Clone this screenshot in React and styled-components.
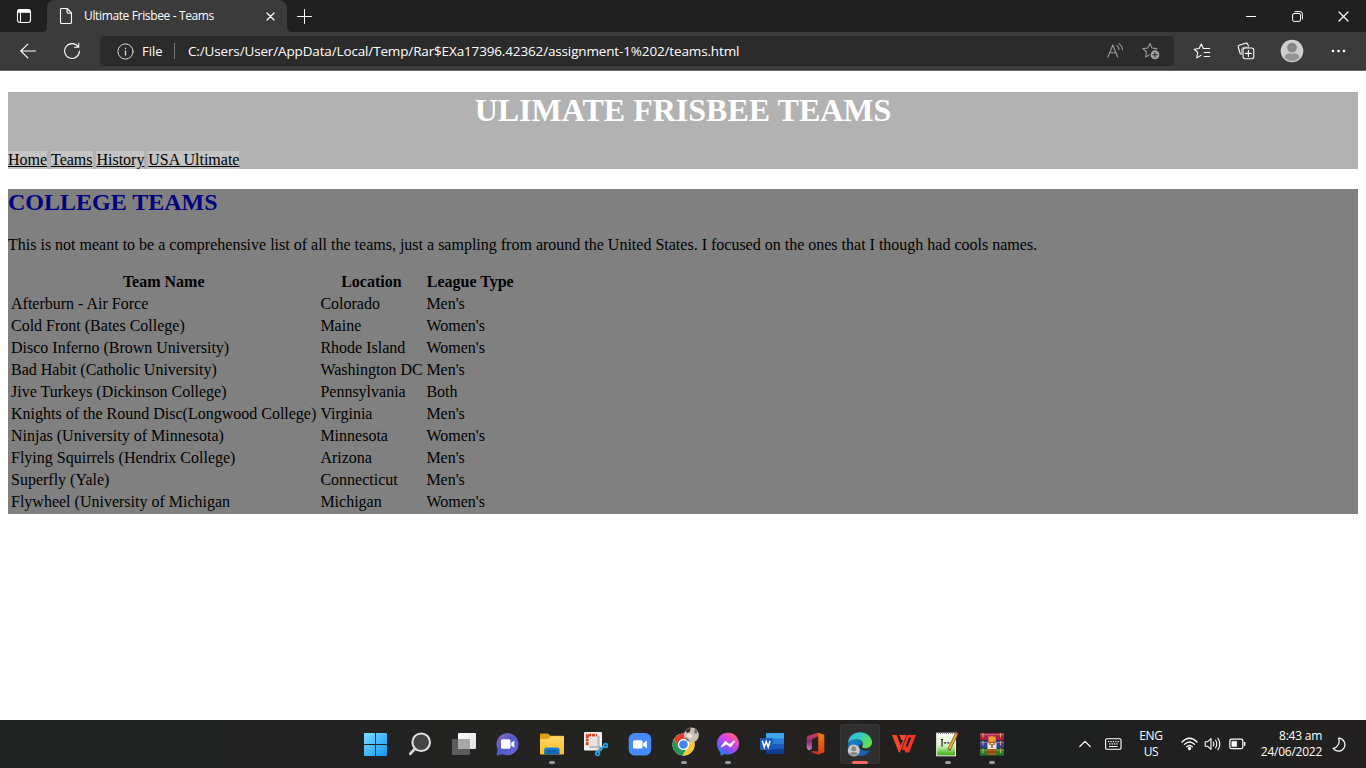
import React from "react";
import styled, { createGlobalStyle } from "styled-components";

const Global = createGlobalStyle`
  *, *::before, *::after { box-sizing: border-box; }
  html, body { margin: 0; padding: 0; background: #fff; overflow: hidden; }
  svg { display: block; flex: none; }
`;

const UI = `"Open Sans", "Noto Sans", sans-serif`;

const Screen = styled.div`
  width: 1366px;
  height: 768px;
  display: flex;
  flex-direction: column;
  background: #fff;
  overflow: hidden;
`;

/* ---------- browser window ---------- */

const TitleBar = styled.div`
  height: 32px;
  flex: none;
  display: flex;
  background: #202020;
  color: #fff;
`;

const Slot = styled.div`
  width: ${(p) => p.$w}px;
  flex: none;
  display: flex;
  align-items: center;
  justify-content: center;
`;

const Tab = styled.div`
  position: relative;
  width: 240px;
  flex: none;
  display: flex;
  align-items: center;
  padding: 0 12px 0 12px;
  background: #3b3b3b;
  border-radius: 8px 8px 0 0;

  &::before, &::after {
    content: "";
    position: absolute;
    bottom: 0;
    width: 4px;
    height: 4px;
  }
  &::before {
    left: -4px;
    background: radial-gradient(circle at 0 0, transparent 3.6px, #3b3b3b 4px);
  }
  &::after {
    right: -4px;
    background: radial-gradient(circle at 100% 0, transparent 3.6px, #3b3b3b 4px);
  }
`;

const TabTitle = styled.span`
  flex: 1;
  margin-left: 11px;
  font: 12px/16px ${UI};
  letter-spacing: -0.36px;
  white-space: nowrap;
`;

const Spacer = styled.div`
  flex: 1;
`;

const Toolbar = styled.div`
  height: 39px;
  flex: none;
  display: flex;
  align-items: center;
  padding: 0 6px;
  background: #3b3b3b;
  border-bottom: 1px solid #6c6a6a;
  color: #fff;
`;

const AddressBar = styled.div`
  width: 1074px;
  height: 30px;
  margin: 0 6px 0 6px;
  display: flex;
  align-items: center;
  padding: 0 5px 0 17px;
  background: #2b2b2b;
  border-radius: 4px;
  font: 13px/20px ${UI};
  white-space: nowrap;
`;

const Scheme = styled.span`
  width: 32px;
  margin-left: 8px;
`;

const Divider = styled.span`
  width: 1px;
  height: 16px;
  background: #797979;
`;

const Url = styled.span`
  flex: 1;
  margin-left: 13px;
  font-size: 13.5px;
  letter-spacing: -0.145px;
`;

/* ---------- web page ---------- */

const Page = styled.main`
  flex: 1;
  padding: 21px 8px 0;
  font-family: "Liberation Serif", serif;
  font-size: 16px;
  line-height: 18px;
  color: #000;
`;

const Banner = styled.header`
  height: 77px;
  background: #b2b2b2;
`;

const BannerTitle = styled.h1`
  margin: 0 0 22px;
  font-size: 32px;
  line-height: 37px;
  text-align: center;
  color: #fff;
`;

const Nav = styled.nav`
  height: 18px;
  display: flex;
  gap: 3.9px;
`;

const NavLink = styled.a`
  background: #c4c4c4;
  color: #000;
  text-decoration: underline;
`;

const Content = styled.section`
  height: 325px;
  margin-top: 20px;
  background: #808080;
`;

const Heading = styled.h2`
  margin: 0 0 20px;
  font-size: 24px;
  line-height: 27px;
  color: #000080;
`;

const Intro = styled.p`
  margin: 0 0 16px;
  white-space: nowrap;
`;

const Table = styled.table`
  border-collapse: separate;
  border-spacing: 2px;
  table-layout: fixed;
  width: 509px;
`;

const Cell = styled.td`
  padding: 1px;
  height: 20px;
  white-space: nowrap;
  line-height: 18px;
`;

const HeadCell = styled.th`
  width: ${(p) => p.$w}px;
  padding: 1px;
  height: 20px;
  white-space: nowrap;
  line-height: 18px;
`;

/* ---------- taskbar ---------- */

const Taskbar = styled.footer`
  height: 48px;
  flex: none;
  display: flex;
  align-items: center;
  padding-left: 354px;
  background: linear-gradient(90deg, #202223 0, #242321 50%, #23201e 62%, #1e2021 75%, #232120 100%);
  color: #fff;
`;

const AppSlot = styled.div`
  width: 44px;
  height: 48px;
  padding: 4px 2px;
`;

const AppTile = styled.div`
  width: 40px;
  height: 40px;
  display: flex;
  flex-direction: column;
  align-items: center;
  padding-top: 8px;
  gap: 4px;
  border-radius: 4px;
  background: ${(p) => (p.$active ? "#2f2f2f" : "transparent")};
  box-shadow: ${(p) => (p.$active ? "inset 0 0 0 1px #373737" : "none")};
`;

const Indicator = styled.span`
  width: ${(p) => (p.$active ? 16 : 6)}px;
  height: 3px;
  flex: none;
  border-radius: 2px;
  background: ${(p) => (p.$active ? "#ff6763" : "#9a9a9a")};
`;

const Tray = styled.div`
  margin-left: auto;
  padding-right: 10px;
  display: flex;
  align-items: center;
  font: 12px/16px ${UI};
`;

const Language = styled.div`
  width: 48px;
  text-align: center;
  letter-spacing: -0.3px;
`;

const Clock = styled.div`
  width: 71px;
  display: flex;
  flex-direction: column;
  align-items: flex-end;
  white-space: nowrap;
  letter-spacing: -0.25px;
`;

/* ---------- icons ---------- */

const Line = ({ w = 16, h = 16, sw = 1.1, color = "#fff", children }) => (
  <svg width={w} height={h} viewBox={`0 0 ${w} ${h}`} fill="none" stroke={color} strokeWidth={sw} strokeLinecap="round" strokeLinejoin="round">
    {children}
  </svg>
);

const STAR = "M7.5.6 9.6 5.2 14.6 5.8 10.9 9.2 11.8 14.2 7.5 11.8 3.2 14.2 4.1 9.2.5 5.8 5.4 5.2Z";

const TabActions = () => (
  <Line>
    <rect x="1.5" y="1.5" width="13" height="13" rx="2.5" />
    <path d="M2 4.2V3.2Q2 2 3.2 2H12.8Q14 2 14 3.2V4.2Z" fill="#fff" />
    <path d="M4.5 4.5V14" />
  </Line>
);
const PageIcon = () => (
  <Line w={14} h={16}>
    <path d="M2.5.5H8L12.5 5V14.2Q12.5 15.5 11.2 15.5H2.8Q1.5 15.5 1.5 14.2V1.8Q1.5.5 2.8.5M8 .8V3.8Q8 5.2 9.3 5.2H12.3" />
  </Line>
);
const CloseIcon = ({ s = 9 }) => (
  <Line w={s} h={s} sw={1.2}><path d={`M1 1 ${s - 1} ${s - 1}M${s - 1} 1 1 ${s - 1}`} /></Line>
);
const Plus = () => <Line w={15} h={15} sw={1}><path d="M7.5.5V14.5M.5 7.5H14.5" /></Line>;
const Minimize = () => <Line w={10} h={11} sw={1}><path d="M0 5.5H10" strokeLinecap="butt" /></Line>;
const Restore = () => (
  <Line w={11} h={11} sw={1}>
    <rect x=".6" y="2.5" width="7.9" height="7.9" rx="1.5" />
    <path d="M3 .6H8Q10.4.6 10.4 3V8" />
  </Line>
);
const Back = () => <Line w={16} h={16}><path d="M15.5 8H.8M7.8 1.2.8 8 7.8 14.8" /></Line>;
const Reload = () => (
  <Line w={18} h={18} sw={1.1}><path d="M15.2 5A7.4 7.4 0 1 0 16.4 9M15.7 1.3V5.3H11.5" /></Line>
);
const Info = () => (
  <Line w={17} h={17} sw={1} color="#dcdcdc"><circle cx="8.5" cy="8.5" r="7.6" /><path d="M8.5 7.8V12M8.5 5.2V5.4" strokeWidth="1.3" /></Line>
);
const ReadAloud = () => (
  <Line w={17} h={16} color="#9a9a9a">
    <path d="M1 14 5.8 2 10.6 14M2.7 9.8H8.9M10 2.5Q11.9 4 11.9 6.5M12 .6Q15.4 3 15.4 6.8" />
  </Line>
);
const StarAdd = () => (
  <Line w={18} h={18} color="#9a9a9a">
    <g transform="translate(.4 .8)"><path d={STAR} /></g>
    <circle cx="13" cy="12.8" r="5" fill="#a5a5a5" stroke="#2b2b2b" />
    <path d="M13 10.5V15.1M10.7 12.8H15.3" stroke="#2b2b2b" />
  </Line>
);
const Favorites = () => (
  <Line w={18} h={17}>
    <path d="M10.3 5.4 8.3 1 6.1 5.5 1.1 6.2 4.7 9.5 3.8 14.9 8 12.4M11.2 5.5H16.7M11.2 9.5H16.7M11.2 13.5H16.7" />
  </Line>
);
const Collections = () => (
  <Line w={18} h={18}>
    <path d="M3.3 11.8 1.2 5Q.9 3.7 2.1 3.2L8.6 1.2Q10 .9 10.6 2L11.4 3.9" />
    <path d="M3.3 11.8 4.6 12.6V7.8Q4.6 5.2 7.2 5.2H11.8" strokeWidth=".6" />
    <rect x="6" y="6" width="10.8" height="10.8" rx="2.2" fill="#3b3b3b" />
    <path d="M11.4 8.4V14.4M8.4 11.4H14.4" />
  </Line>
);
const Avatar = () => (
  <svg width="24" height="24" viewBox="0 0 24 24">
    <circle cx="12" cy="12" r="11.3" fill="#d2d0ce" />
    <path d="M4.5 18.5Q5 14.6 9 14.6H15Q19 14.6 19.5 18.5Q16.5 22 12 22Q7.5 22 4.5 18.5Z" fill="#979593" />
    <circle cx="12" cy="8.6" r="5.2" fill="#8a8886" stroke="#d2d0ce" strokeWidth=".6" />
  </svg>
);
const More = () => (
  <svg width="15" height="4" viewBox="0 0 15 4" fill="#fff"><circle cx="2" cy="2" r="1.3" /><circle cx="7.5" cy="2" r="1.3" /><circle cx="13" cy="2" r="1.3" /></svg>
);

const Svg24 = ({ children }) => <svg width="24" height="25" viewBox="0 0 24 25">{children}</svg>;

const Grad = ({ id, stops, x2 = 1, y2 = 1 }) => (
  <linearGradient id={id} x1="0" y1="0" x2={x2} y2={y2}>
    {stops.map((c, i) => <stop key={i} offset={i / (stops.length - 1)} stopColor={c} />)}
  </linearGradient>
);

const Start = () => (
  <Svg24>
    <defs><linearGradient id="win" gradientUnits="userSpaceOnUse" x1="0" y1="1" x2="24" y2="24"><stop offset="0" stopColor="#7fdcff" /><stop offset="1" stopColor="#0f94f4" /></linearGradient></defs>
    <path fill="url(#win)" d="M.8 1H11V12H0V1.8Q0 1 .8 1ZM12 1H22.2Q23 1 23 1.8V12H12ZM0 13H11V24H.8Q0 24 0 23.2ZM12 13H23V23.2Q23 24 22.2 24H12Z" />
  </Svg24>
);
const Search = () => (
  <Svg24>
    <path d="M6.5 17.3 2.3 21.7" stroke="#d5d5d5" strokeWidth="2.8" strokeLinecap="round" />
    <circle cx="13.2" cy="10.3" r="8.8" fill="#444" stroke="#e2e2e2" strokeWidth="2" />
  </Svg24>
);
const TaskView = () => (
  <Svg24>
    <defs><Grad id="tv" stops={["#ffffff", "#dedede"]} /></defs>
    <rect x="6" y="1" width="18" height="16" rx="1" fill="url(#tv)" />
    <rect x="0" y="7" width="18" height="16" rx="1" fill="#5c5c5c" />
    <path d="M6 7H18V17H6Z" fill="#a8a8a8" />
  </Svg24>
);
const Chat = () => (
  <Svg24>
    <defs><Grad id="chat" stops={["#8c6fc6", "#5059c9", "#6d66d8"]} /></defs>
    <path d="M11.7.9A11.2 11.2 0 1 1 6.7 22.3L1.6 23.4Q.3 23.6.6 22.2L1.7 17.5A11.4 11.4 0 0 1 11.7.9Z" fill="url(#chat)" />
    <rect x="5" y="7.3" width="9.5" height="9.5" rx="1.5" fill="#fff" /><path d="M15.2 10.8 18.3 8.4V15.8L15.2 13.5Z" fill="#fff" />
  </Svg24>
);
const Explorer = () => (
  <Svg24>
    <defs><Grad id="fold" stops={["#ffd768", "#ffbd24"]} x2={0} /><Grad id="fb" stops={["#1787d8", "#0d62ac"]} x2={0} /></defs>
    <g transform="translate(0 .4)">
      <path d="M0 2Q0 1 1 1H8L10.5 3.3H23Q24 3.3 24 4.3V9H0Z" fill="#e3a00c" />
      <path d="M0 6.5H8L10.8 3.8H23Q24 3.8 24 5V21Q24 22 23 22H1Q0 22 0 21Z" fill="url(#fold)" />
      <path d="M4.2 22V17.2Q4.2 15 6.5 15H17Q19.5 15 19.5 17.2V22Z" fill="url(#fb)" />
      <path d="M8 18.5H16" stroke="#0b5594" strokeWidth="1.3" />
    </g>
  </Svg24>
);
const Snip = () => (
  <Svg24>
    <rect x="0" y="0" width="18" height="18.5" rx="1" fill="#f2f2f2" />
    <path d="M3.2 13.3V3.2H13.3" stroke="#d9401c" strokeWidth="2.8" strokeDasharray="3 .7" fill="none" />
    <rect x="5.5" y="5.5" width="8.5" height="9" fill="#e8e4e2" />
    <path d="M14.5 4V17.5M5 15.2H16" stroke="#bdbdbd" strokeWidth="2.3" fill="none" />
    <path d="M13 20 20 13.8M15 14 18 18" stroke="#999" strokeWidth="1.3" />
    <circle cx="21.6" cy="13.6" r="1.8" fill="none" stroke="#22a3dc" strokeWidth="1.9" /><circle cx="13.6" cy="21.6" r="1.8" fill="none" stroke="#22a3dc" strokeWidth="1.9" />
    <path d="M15 20 16.5 16.5 19.5 15" fill="none" stroke="#22a3dc" strokeWidth="2" />
  </Svg24>
);
const Zoom = () => (
  <Svg24>
    <rect x=".7" y=".9" width="22.5" height="22.7" rx="6.4" fill="#458cfa" />
    <rect x="5" y="8.3" width="9.6" height="8.2" rx="1.5" fill="#fff" /><path d="M15.2 11.2 18.8 8.5V16.3L15.2 13.7Z" fill="#fff" />
  </Svg24>
);

const BadgedIcon = styled.svg`
  margin-top: -5px;
`;

const Chrome = () => (
  <BadgedIcon width="30" height="30" viewBox="0 0 30 30">
    <g transform="translate(1 0)">
      <circle cx="13.5" cy="17.5" r="11" fill="#fff" />
      <g transform="translate(-.5 .5)">
        <path d="M4.5 11.5A11 11 0 0 1 23.5 11.5H14A5.5 5.5 0 0 0 9.2 14.3V19.7Z" fill="#e33b2e" />
        <path d="M4.5 11.5 9.2 19.8A5.5 5.5 0 0 0 14 22.5H16.5L13 28A11 11 0 0 1 4.5 11.5Z" fill="#219955" />
        <path d="M13 28 18.8 19.8A5.5 5.5 0 0 0 18.8 14L14 11.5H23.5A11 11 0 0 1 13 28Z" fill="#fdc92e" />
        <circle cx="14" cy="17" r="5.4" fill="#fff" /><circle cx="14" cy="17" r="4.3" fill="#4285f4" />
      </g>
    </g>
    <g transform="translate(-.3 0)">
      <circle cx="22.7" cy="8" r="7.5" fill="#c9c1b6" />
      <path d="M16.6 4Q19 1 22 .8L21 5 18.5 6Z" fill="#302c2a" /><path d="M26 2 29 4 27.5 7 25.5 5.5Z" fill="#6b625a" />
      <path d="M18 8 21 6 24 8.5 23 11 19 11Z" fill="#e9e3da" /><path d="M16 10.5 19 11.5 21 14.8Q17.5 14 16 10.5Z" fill="#6f665d" />
    </g>
  </BadgedIcon>
);
const Messenger = () => (
  <Svg24>
    <defs><linearGradient id="msg" x1=".85" y1="0" x2=".15" y2="1"><stop offset="0" stopColor="#ff646b" /><stop offset=".35" stopColor="#e045dc" /><stop offset=".65" stopColor="#8751fa" /><stop offset="1" stopColor="#098cff" /></linearGradient></defs>
    <path d="M12 .8C18.5.8 23 5.4 23 11.6S18.5 22.5 12 22.5Q10.2 22.5 8.5 22L5.7 23.4Q4.5 23.8 4.4 22.6V20.2Q1 17.2 1 11.6C1 5.4 5.5.8 12 .8Z" fill="url(#msg)" />
    <path d="M5.3 14.8 9.4 9.7 13.4 12.8 18.6 9 14.7 14.7 10.6 11.8Z" fill="#fff" stroke="#fff" strokeWidth="1.1" strokeLinejoin="round" />
  </Svg24>
);
const Word = () => (
  <Svg24>
    <path d="M6 2Q6 1 7 1H23Q24 1 24 2V7H6Z" fill="#41a5ee" /><path d="M6 6.5H24V12H6Z" fill="#2b7cd3" /><path d="M6 12H24V17H6Z" fill="#185abd" /><path d="M6 17H24V21Q24 22 23 22H7Q6 22 6 21Z" fill="#103f91" />
    <rect x="0" y="6" width="12.5" height="12" rx="1" fill="#185abd" />
    <path d="M2.3 8.8 4.2 15.1 6.2 9.5 8.2 15.1 10.1 8.8" stroke="#fff" strokeWidth="1.5" fill="none" />
  </Svg24>
);
const Office = () => (
  <Svg24>
    <defs><Grad id="of" stops={["#cf3c59", "#8d2d78", "#d47fd0"]} x2={0} /><Grad id="of2" stops={["#f57916", "#d83b12"]} x2={0} /></defs>
    <path d="M14 .7 20.3 2.8V20.2L14 22.7 7.5 19.3 14.2 19.8V4Z" fill="url(#of2)" />
    <path d="M14 .7V4.5L8 7.3V16L5.5 18.6Q2.7 17.5 2.7 15.5V6Q2.7 4.3 4.5 3.7Z" fill="url(#of)" />
    <path d="M7.2 19.1 14.2 19.8V22.6L8 20.4Z" fill="#c82c32" />
  </Svg24>
);
const Edge = () => (
  <svg width="26" height="25" viewBox="0 0 26 25">
    <defs><Grad id="e1" stops={["#31b5e8", "#34c9c5", "#65df50"]} y2={.5} /><Grad id="e2" stops={["#1686ce", "#0c59a4"]} /></defs>
    <path d="M1 11C1.5 4.5 6.5.2 13 .2S25 5 25 10.2C25 14.5 21.5 16.2 18 16.2C15.5 16.2 14.6 15 15.5 13.5C17.2 10.5 14.2 7.6 10 7.6Q3.7 7.6 1 11Z" fill="url(#e1)" />
    <path d="M1 12Q4 7.4 9.4 7.6C13.8 7.8 15.8 10.5 15.4 12.7C10 11.5 9.8 20.5 22.8 18.5Q18.8 24.5 12 24Q2 23 1 12Z" fill="url(#e2)" />
    <path d="M10.3 13.5C9.5 18.5 15 22 22.8 18.5Q18.8 24.5 12 24Q6.5 18.5 10.3 13.5Z" fill="#1b5fae" />
    <circle cx="6.8" cy="18.5" r="6" fill="#c8c8c8" /><circle cx="6.8" cy="16.7" r="2.5" fill="#888" /><path d="M2.7 22Q3.2 19.9 6.8 19.9T10.9 22Q7 25.5 2.7 22Z" fill="#888" />
  </svg>
);
const Wps = () => (
  <Svg24>
    <path d="M0 3H4.6L8.7 13.5 11.2 8H9.5L7.3 3H14.5L7.8 20.6H6.8Z" fill="#f9462d" />
    <path d="M9.6 17.5 15.3 3H24L17 20.6H13.5L11.8 16.4 13.5 12.4 15 15.8 19.5 5.5H17L11.9 18Z" fill="#f33422" />
  </Svg24>
);
const Notepad = () => (
  <Svg24>
    <defs><Grad id="np" stops={["#fbfff8", "#e4f8cf", "#2fae0b"]} x2={0} /></defs>
    <rect x=".7" y="1.2" width="18.8" height="22.6" fill="url(#np)" stroke="#f1f1f1" />
    <path d="M2 1H19" stroke="#777" strokeWidth="1.4" strokeDasharray="1 1" />
    <path d="M6 7.5V14.5M4.8 7.5H7M7.8 10.8H10.3M11.3 10.8H13.5" stroke="#222" strokeWidth="1.2" />
    <path d="M12.8 18 20.5 2" stroke="#724d18" strokeWidth="3.2" /><path d="M13.2 17 20.6 1.9" stroke="#efb331" strokeWidth="1.9" /><path d="M20 2.5 21 .6" stroke="#d35a39" strokeWidth="3" />
  </Svg24>
);
const WinRar = () => (
  <Svg24>
    <rect x="0" y="1" width="24" height="7" rx="1" fill="#a91f46" /><rect x="0" y="8.7" width="24" height="7" rx="1" fill="#353f9d" /><rect x="0" y="16.4" width="24" height="7" rx="1" fill="#277b2f" />
    <path d="M0 2.7H24M0 10.4H24M0 18.1H24" stroke="#ffffff55" strokeWidth="1" />
    <path d="M3 1V23.4M20.5 1V23.4" stroke="#d4a83f" strokeWidth="1.2" strokeDasharray="4.5 3.2" />
    <rect x="8" y="8" width="8" height="15" rx="1" fill="#b9561d" />
    <path d="M8.5 3.5 10.5 5 12 3.2 13.5 5 15.5 4 15.8 10H8.6Z" fill="#f1a035" /><path d="M7.5 11H16.5V17H7.5Z" fill="#eee5dc" /><path d="M10 9V13M14 9V13" stroke="#c56c22" strokeWidth="1.6" /><path d="M12 12V16M8.5 20H15.5" stroke="#6e351c" strokeWidth="1.2" />
  </Svg24>
);

const Chevron = () => <Line w={12} h={8} sw={1.2}><path d="M.8 6.5 6 1.3 11.2 6.5" /></Line>;
const Keyboard = () => (
  <Line w={17} h={12} sw={1.1}>
    <rect x=".6" y=".7" width="15.4" height="10.6" rx="1.3" />
    <path d="M3.4 3.6H13.7M4.6 5.9H13.2" strokeDasharray=".5 1.9" strokeWidth="1.1" /><path d="M4.5 8.5H12" />
  </Line>
);
const Wifi = () => (
  <Line w={17} h={14} sw={1.3}>
    <path d="M1 5Q8.5-2.4 16 5M3.4 7.4Q8.5 2.5 13.6 7.4M5.7 9.8Q8.5 7.2 11.3 9.8" /><circle cx="8.5" cy="11.5" r="1" fill="#fff" />
  </Line>
);
const Volume = () => (
  <Line w={18} h={14} sw={1.1}>
    <path d="M1.2 4.8H3.5L7 1.7V12.3L3.5 9.2H1.2ZM9.3 5Q10.5 7 9.3 9M11.6 3.2Q14 7 11.6 10.8M13.9 1.3Q17.8 7 13.9 12.7" />
  </Line>
);
const Battery = () => (
  <Line w={17} h={12} sw={1.2}>
    <rect x=".8" y="1.1" width="13" height="9.6" rx="1.8" /><rect x="3" y="3.3" width="4.7" height="5.2" fill="#fff" strokeWidth=".5" /><path d="M15.6 4.6V7.2" strokeWidth="1.5" />
  </Line>
);
const Moon = () => (
  <Line w={14} h={15} sw={1.2}>
    <path d="M6.6 1.1A6.5 6.5 0 1 1 1.1 11.4C5.8 10.4 8.2 6 6.6 1.1Z" />
  </Line>
);

const apps = [
  { Icon: Start }, { Icon: Search }, { Icon: TaskView }, { Icon: Chat },
  { Icon: Explorer, open: true }, { Icon: Snip }, { Icon: Zoom },
  { Icon: Chrome, open: true }, { Icon: Messenger, open: true }, { Icon: Word },
  { Icon: Office }, { Icon: Edge, open: true, active: true }, { Icon: Wps },
  { Icon: Notepad, open: true }, { Icon: WinRar, open: true },
];

const teams = [
  ["Afterburn - Air Force", "Colorado", "Men's"],
  ["Cold Front (Bates College)", "Maine", "Women's"],
  ["Disco Inferno (Brown University)", "Rhode Island", "Women's"],
  ["Bad Habit (Catholic University)", "Washington DC", "Men's"],
  ["Jive Turkeys (Dickinson College)", "Pennsylvania", "Both"],
  ["Knights of the Round Disc(Longwood College)", "Virginia", "Men's"],
  ["Ninjas (University of Minnesota)", "Minnesota", "Women's"],
  ["Flying Squirrels (Hendrix College)", "Arizona", "Men's"],
  ["Superfly (Yale)", "Connecticut", "Men's"],
  ["Flywheel (University of Michigan", "Michigan", "Women's"],
];

export default function App() {
  return (
    <Screen>
      <Global />
      <TitleBar>
        <Slot $w={47}><TabActions /></Slot>
        <Tab>
          <PageIcon />
          <TabTitle>Ultimate Frisbee - Teams</TabTitle>
          <CloseIcon />
        </Tab>
        <Slot $w={35}><Plus /></Slot>
        <Spacer />
        <Slot $w={46}><Minimize /></Slot>
        <Slot $w={46}><Restore /></Slot>
        <Slot $w={46}><CloseIcon s={11} /></Slot>
      </TitleBar>
      <Toolbar>
        <Slot $w={44}><Back /></Slot>
        <Slot $w={44}><Reload /></Slot>
        <AddressBar>
          <Info />
          <Scheme>File</Scheme>
          <Divider />
          <Url>C:/Users/User/AppData/Local/Temp/Rar$EXa17396.42362/assignment-1%202/teams.html</Url>
          <Slot $w={36}><ReadAloud /></Slot>
          <Slot $w={36}><StarAdd /></Slot>
        </AddressBar>
        <Slot $w={44}><Favorites /></Slot>
        <Slot $w={44}><Collections /></Slot>
        <Slot $w={48}><Avatar /></Slot>
        <Slot $w={44}><More /></Slot>
      </Toolbar>
      <Page>
        <Banner>
          <BannerTitle>ULIMATE FRISBEE TEAMS</BannerTitle>
          <Nav>
            {["Home", "Teams", "History", "USA Ultimate"].map((t) => <NavLink key={t}>{t}</NavLink>)}
          </Nav>
        </Banner>
        <Content>
          <Heading>COLLEGE TEAMS</Heading>
          <Intro>This is not meant to be a comprehensive list of all the teams, just a sampling from around the United States. I focused on the ones that I though had cools names.</Intro>
          <Table>
            <thead>
              <tr><HeadCell $w={307.4}>Team Name</HeadCell><HeadCell $w={104}>Location</HeadCell><HeadCell $w={89.6}>League Type</HeadCell></tr>
            </thead>
            <tbody>
              {teams.map((row) => <tr key={row[0]}>{row.map((c, i) => <Cell key={i}>{c}</Cell>)}</tr>)}
            </tbody>
          </Table>
        </Content>
      </Page>
      <Taskbar>
        {apps.map(({ Icon, open, active }, i) => (
          <AppSlot key={i}>
            <AppTile $active={active}>
              <Icon />
              {open && <Indicator $active={active} />}
            </AppTile>
          </AppSlot>
        ))}
        <Tray>
          <Slot $w={28}><Chevron /></Slot>
          <Slot $w={28}><Keyboard /></Slot>
          <Language>ENG<br />US</Language>
          <Slot $w={28}><Wifi /></Slot>
          <Slot $w={20}><Volume /></Slot>
          <Slot $w={28}><Battery /></Slot>
          <Clock><span>8:43 am</span><span>24/06/2022</span></Clock>
          <Slot $w={34}><Moon /></Slot>
        </Tray>
      </Taskbar>
    </Screen>
  );
}
